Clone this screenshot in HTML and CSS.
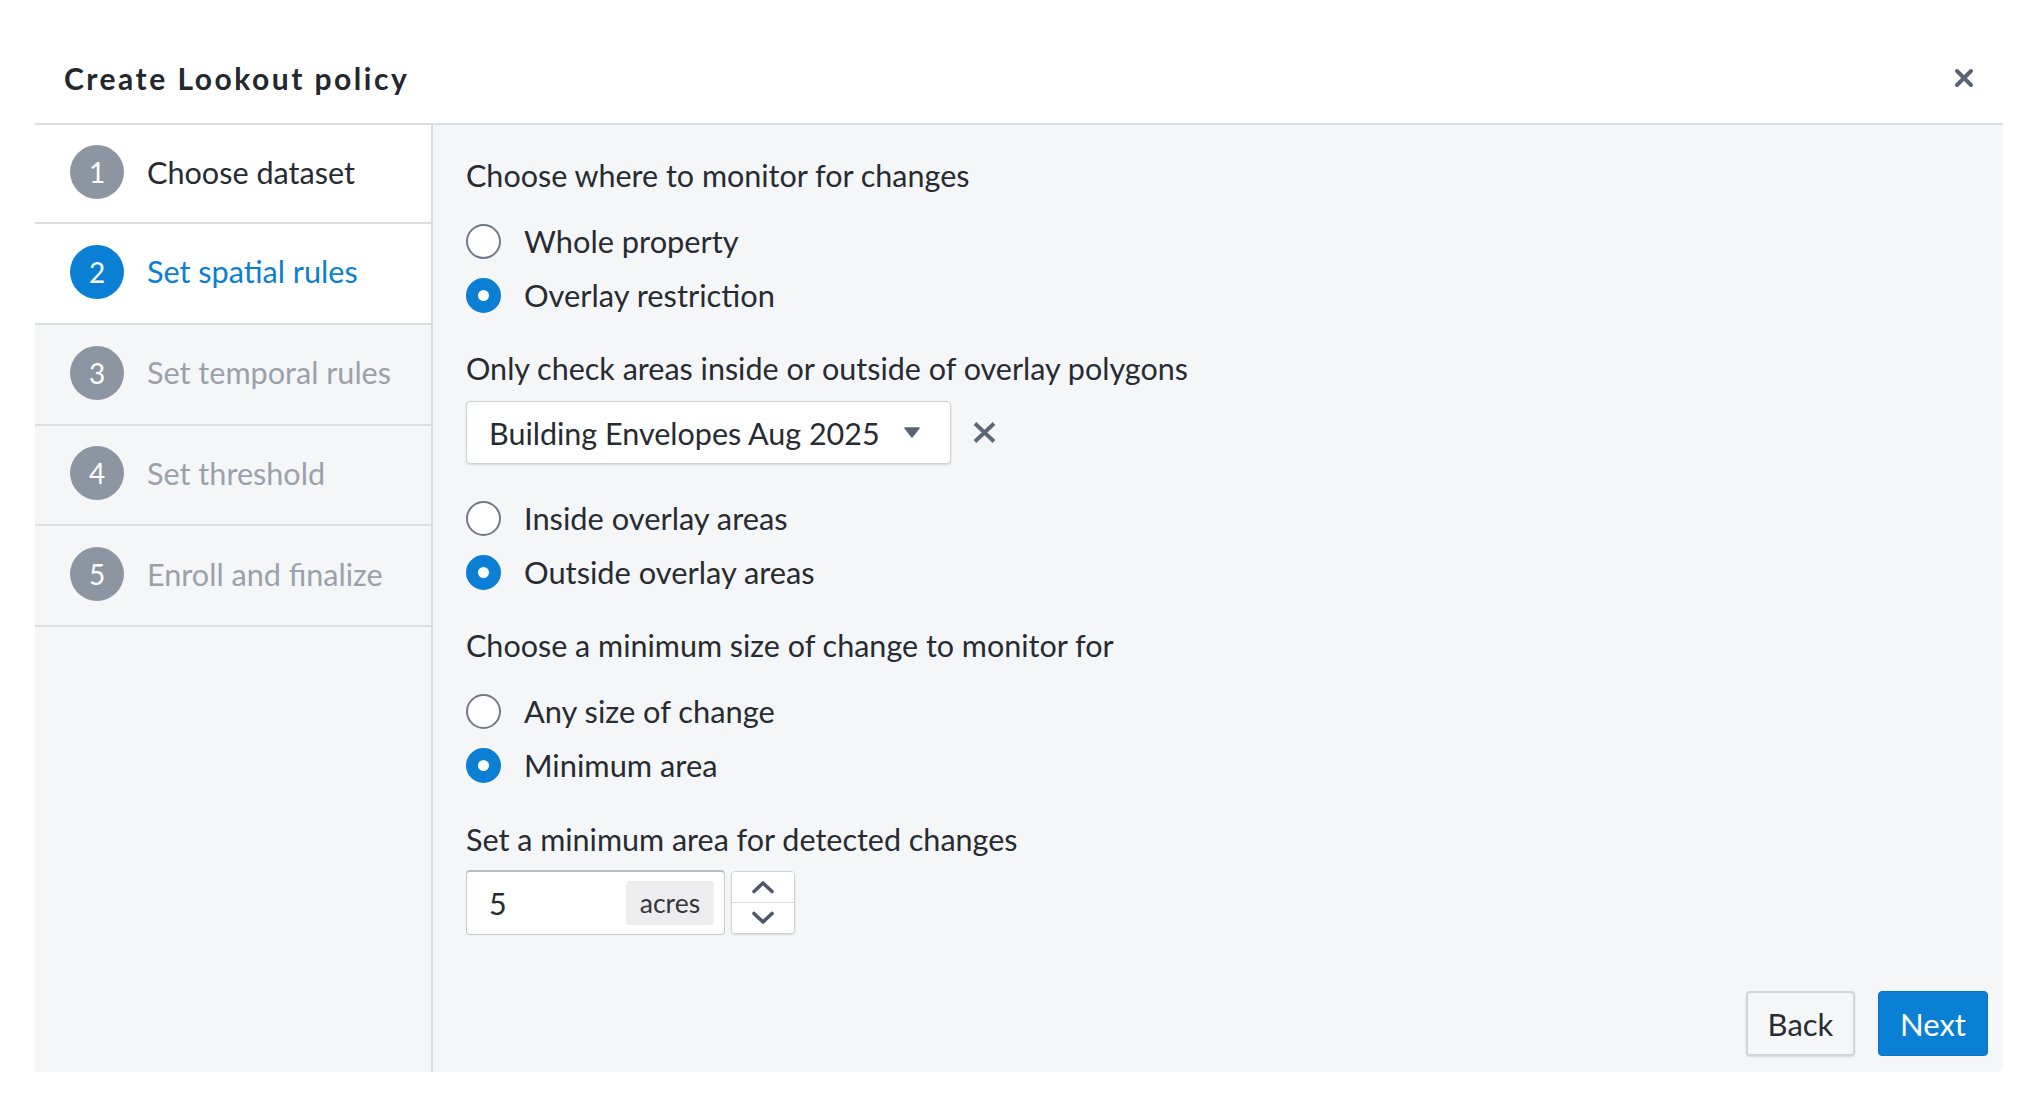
FILE: index.html
```html
<!DOCTYPE html>
<html lang="en">
<head>
<meta charset="utf-8">
<title>Create Lookout policy</title>
<link rel="stylesheet" href="styles.css">
</head>
<body>
<div class="modal">
  <header class="modal-header">
    <h1 class="modal-title">Create Lookout policy</h1>
    <button class="close-btn" aria-label="Close">
      <svg width="20" height="20" viewBox="0 0 20 20"><path d="M3 3 L17 17 M17 3 L3 17" stroke="#5a6374" stroke-width="4" stroke-linecap="round" fill="none"/></svg>
    </button>
  </header>
  <div class="modal-body">
    <nav class="steps">
      <div class="step done"><span class="step-num">1</span><span class="step-label">Choose dataset</span></div>
      <div class="step active"><span class="step-num">2</span><span class="step-label">Set spatial rules</span></div>
      <div class="step todo"><span class="step-num">3</span><span class="step-label">Set temporal rules</span></div>
      <div class="step todo"><span class="step-num">4</span><span class="step-label">Set threshold</span></div>
      <div class="step todo"><span class="step-num">5</span><span class="step-label">Enroll and finalize</span></div>
    </nav>
    <main class="content">
      <div class="form">
        <p class="heading h-first">Choose where to monitor for changes</p>
        <div class="radio-group">
          <label class="radio-row"><span class="radio"></span><span>Whole property</span></label>
          <label class="radio-row"><span class="radio checked"></span><span>Overlay restriction</span></label>
        </div>
        <p class="heading h-after-group">Only check areas inside or outside of overlay polygons</p>
        <div class="select-row">
          <div class="select">
            <span class="select-text">Building Envelopes Aug 2025</span>
            <svg class="caret" width="16" height="11" viewBox="0 0 16 11"><path d="M1 1 H15 L8 10 Z" fill="#5a6374" stroke="#5a6374" stroke-width="1.5" stroke-linejoin="round"/></svg>
          </div>
          <svg class="clear" width="23" height="21" viewBox="0 0 23 21"><path d="M2 1.5 L21 19.5 M21 1.5 L2 19.5" stroke="#5d6776" stroke-width="3.8" fill="none"/></svg>
        </div>
        <div class="radio-group g-after-select">
          <label class="radio-row"><span class="radio"></span><span>Inside overlay areas</span></label>
          <label class="radio-row"><span class="radio checked"></span><span>Outside overlay areas</span></label>
        </div>
        <p class="heading h-after-group">Choose a minimum size of change to monitor for</p>
        <div class="radio-group">
          <label class="radio-row"><span class="radio"></span><span>Any size of change</span></label>
          <label class="radio-row"><span class="radio checked"></span><span>Minimum area</span></label>
        </div>
        <p class="heading h-after-group2">Set a minimum area for detected changes</p>
        <div class="number-row">
          <div class="number-input">
            <span class="number-value">5</span>
            <span class="unit">acres</span>
          </div>
          <div class="stepper">
            <button class="step-btn" aria-label="Increase">
              <svg width="24" height="14" viewBox="0 0 24 14"><path d="M3 11.5 L12 3 L21 11.5" stroke="#4f5869" stroke-width="3.6" fill="none" stroke-linecap="round" stroke-linejoin="round"/></svg>
            </button>
            <button class="step-btn" aria-label="Decrease">
              <svg width="24" height="14" viewBox="0 0 24 14"><path d="M3 2.5 L12 11 L21 2.5" stroke="#4f5869" stroke-width="3.6" fill="none" stroke-linecap="round" stroke-linejoin="round"/></svg>
            </button>
          </div>
        </div>
      </div>
      <footer class="actions">
        <button class="btn btn-secondary">Back</button>
        <button class="btn btn-primary">Next</button>
      </footer>
    </main>
  </div>
</div>
</body>
</html>
```

FILE: styles.css
```css
* { box-sizing: border-box; }

html, body {
  margin: 0;
  padding: 0;
  background: #ffffff;
  font-family: Lato, "Open Sans", "Liberation Sans", sans-serif;
  color: #272b32;
}

.modal {
  margin-left: 35px;
  width: 1968px;
  height: 1072px;
  display: flex;
  flex-direction: column;
}

.modal-header {
  height: 123px;
  display: flex;
  align-items: center;
  justify-content: space-between;
  padding: 33px 28px 0 29px;
}

.modal-title {
  margin: 0;
  font-size: 30px;
  font-weight: 700;
  letter-spacing: 2.5px;
  color: #23272e;
}

.close-btn {
  border: 0;
  background: transparent;
  padding: 0;
  width: 22px;
  height: 22px;
  display: flex;
  align-items: center;
  justify-content: center;
}

.modal-body {
  flex: 1;
  display: flex;
  background: #f5f6f8;
  border-top: 2px solid #dcdee1;
  border-bottom-right-radius: 6px;
}

.steps {
  width: 398px;
  flex: none;
  border-right: 2px solid #d7d9dc;
  display: flex;
  flex-direction: column;
}

.step {
  height: 100.8px;
  border-bottom: 2px solid #dcdee1;
  display: flex;
  align-items: center;
  padding: 0 0 3px 35px;
  gap: 23px;
}

.step.done { height: 99px; }

.step.done, .step.active { background: #ffffff; }
.step.todo { background: #f5f6f8; }

.step-num {
  width: 54px;
  height: 54px;
  border-radius: 50%;
  background: #8e95a2;
  color: #ffffff;
  display: flex;
  align-items: center;
  justify-content: center;
  font-size: 28px;
}

.step.active .step-num { background: #0a7fd3; }

.step-label {
  font-size: 30.6px;
  color: #272b32;
}

.step.active .step-label { color: #0a7fd3; }
.step.todo .step-label { color: #9ba1ab; }

.content {
  flex: 1;
  display: flex;
  flex-direction: column;
  padding: 0 15px 16px 33px;
}

.form { display: flex; flex-direction: column; align-items: flex-start; }

.heading {
  margin: 0;
  font-size: 30.5px;
  line-height: 36px;
  color: #272b32;
}

.h-first { margin-top: 32px; }
.h-after-group { margin-top: 28px; }
.h-after-group2 { margin-top: 29px; }

.radio-group {
  margin-top: 21px;
  display: flex;
  flex-direction: column;
}

.g-after-select { margin-top: 27px; }

.radio-row {
  height: 54px;
  display: flex;
  align-items: center;
  gap: 23px;
  font-size: 30.8px;
  color: #272b32;
}

.radio {
  width: 35px;
  height: 35px;
  border-radius: 50%;
  border: 2px solid #717a89;
  background: #ffffff;
  flex: none;
}

.radio.checked {
  border: 12px solid #0a7fd3;
  background: #ffffff;
}

.select-row {
  margin-top: 15px;
  display: flex;
  align-items: center;
  gap: 22px;
}

.select {
  width: 485px;
  height: 63px;
  background: #ffffff;
  border: 1px solid #cfd2d7;
  border-radius: 4px;
  box-shadow: 0 1px 2px rgba(0, 0, 0, 0.12);
  display: flex;
  align-items: center;
  justify-content: space-between;
  padding: 0 30px 0 22px;
}

.select-text {
  font-size: 30.5px;
  color: #272b32;
}

.caret { display: block; }
.clear { display: block; }

.number-row {
  margin-top: 13px;
  display: flex;
  gap: 6px;
  align-items: flex-start;
}

.number-input {
  width: 259px;
  height: 65px;
  background: #ffffff;
  border: 1px solid #c7cad0;
  border-top: 2px solid #b9bcc2;
  border-radius: 4px;
  display: flex;
  align-items: center;
  justify-content: space-between;
  padding: 0 10px 0 22px;
}

.number-value { font-size: 30.5px; color: #272b32; }

.unit {
  background: #ededef;
  border-radius: 4px;
  width: 88px;
  height: 44px;
  display: flex;
  align-items: center;
  justify-content: center;
  font-size: 26.5px;
  color: #33373e;
}

.stepper {
  width: 64px;
  height: 63px;
  margin-top: 1px;
  display: flex;
  flex-direction: column;
  border: 1px solid #cfd2d7;
  border-radius: 4px;
  background: #ffffff;
  box-shadow: 0 1px 2px rgba(0, 0, 0, 0.12);
  overflow: hidden;
}

.step-btn {
  flex: 1;
  border: 0;
  background: #ffffff;
  padding: 0;
  display: flex;
  align-items: center;
  justify-content: center;
}

.step-btn + .step-btn { border-top: 1px solid #d7d9dd; }

.actions {
  margin-top: auto;
  display: flex;
  justify-content: flex-end;
  gap: 23px;
}

.btn {
  height: 65px;
  font-family: Lato, "Open Sans", "Liberation Sans", sans-serif;
  font-size: 31px;
  border-radius: 4px;
  padding: 0;
}

.btn-secondary {
  width: 109px;
  background: #f5f6f8;
  border: 2px solid #d3d5d9;
  color: #272b32;
  box-shadow: 0 1px 2px rgba(0, 0, 0, 0.12);
}

.btn-primary {
  width: 110px;
  background: #0a7fd3;
  border: 1px solid #0a73c0;
  color: #ffffff;
}
```
